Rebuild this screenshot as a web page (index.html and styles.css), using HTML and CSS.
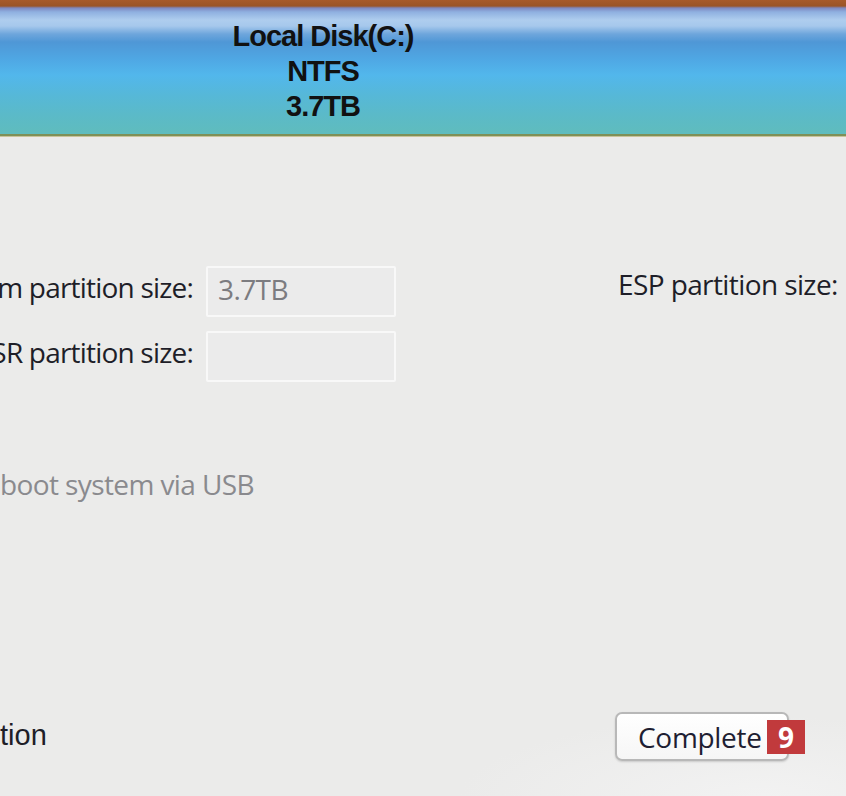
FILE: index.html
```html
<!DOCTYPE html>
<html>
<head>
<meta charset="utf-8">
<link rel="stylesheet" href="styles.css">
</head>
<body>
<div class="disk-bar">
  <div class="partition">
    <div class="part-name">Local Disk(C:)</div>
    <div class="part-fs">NTFS</div>
    <div class="part-size">3.7TB</div>
  </div>
</div>
<div class="form">
  <div class="row">
    <div class="label"><span>m partition size:</span></div>
    <div class="field">3.7TB</div>
    <div class="esp-label">ESP partition size:</div>
  </div>
  <div class="row row2">
    <div class="label"><span>SR partition size:</span></div>
    <div class="field"></div>
  </div>
  <div class="check-row">boot system via USB</div>
  <div class="footer">
    <div class="footer-text">tion</div>
    <button class="complete">Complete<span class="badge">9</span></button>
  </div>
</div>
</body>
</html>
```
FILE: styles.css
```css
html, body {
  margin: 0;
  padding: 0;
}
body {
  width: 846px;
  height: 796px;
  overflow: hidden;
  background: radial-gradient(ellipse 300px 80px at 760px 796px, #f2f2f2, #ebebea);
  font-family: "Open Sans", "Noto Sans", sans-serif;
  color: #1e1e28;
}
.disk-bar {
  height: 134px;
  background: linear-gradient(to bottom,
    #a75a2a 0px, #9a5426 6px, #7d88c0 8px, #8fb0e0 12px, #aecdee 20px,
    #a6c8ec 26px, #6ea6dc 34px, #4f97d6 42px, #4fa8e4 60px,
    #52b7ec 75px, #56b8d8 95px, #5bbac8 115px, #5fbcbe 132px);
  border-bottom: 2px solid #7e9058;
  box-shadow: 0 1px 0 #c9c29a;
  display: flex;
}
.partition {
  width: 646px;
  display: flex;
  flex-direction: column;
  align-items: center;
  padding-top: 19px;
  font-family: "Liberation Sans", Arial, sans-serif;
  font-weight: bold;
  font-size: 29px;
  line-height: 35px;
  color: #111;
  letter-spacing: -1px;
}
.form {
  display: flex;
  flex-direction: column;
}
.row {
  display: flex;
  align-items: flex-start;
  margin-top: 130px;
  height: 51px;
}
.row2 {
  margin-top: 14px;
}
.label, .esp-label, .check-row {
  font-size: 28px;
  letter-spacing: -0.6px;
  line-height: 34px;
  white-space: nowrap;
}
.label {
  width: 193px;
  margin-right: 13px;
  display: flex;
  justify-content: flex-end;
  line-height: 42px;
  letter-spacing: -0.8px;
}
.label span {
  flex: none;
}
.field {
  box-sizing: border-box;
  width: 190px;
  height: 51px;
  border: 2px solid #f8f8f8;
  border-radius: 2px;
  background: #ebebeb;
  color: #7c7c80;
  font-size: 28px;
  letter-spacing: -0.6px;
  line-height: 42px;
  padding-left: 10px;
}
.esp-label {
  margin-left: 222px;
  margin-top: 1px;
}
.check-row {
  margin-top: 85px;
  color: #8a8a8e;
}
.footer {
  display: flex;
  align-items: flex-start;
  justify-content: space-between;
  margin-top: 211px;
  height: 49px;
}
.footer-text {
  font-family: "Liberation Sans", Arial, sans-serif;
  font-size: 29px;
  line-height: 47px;
  color: #1e1e28;
}
.complete {
  position: relative;
  margin-right: 57px;
  width: 174px;
  height: 49px;
  border: 2px solid #b8b8b8;
  border-radius: 7px;
  background: linear-gradient(#ffffff, #f6f6f6);
  font-family: "Open Sans", "Noto Sans", sans-serif;
  font-size: 28px;
  letter-spacing: -0.3px;
  line-height: 42px;
  color: #1e1e32;
  text-align: left;
  padding: 0 0 0 21px;
  box-shadow: 0 1px 2px rgba(0,0,0,0.15);
}
.badge {
  position: absolute;
  left: 150px;
  top: 6px;
  width: 38px;
  height: 34px;
  background: #c13a3c;
  color: #fff;
  font-weight: bold;
  font-size: 28px;
  letter-spacing: 0;
  line-height: 34px;
  text-align: center;
}
```
